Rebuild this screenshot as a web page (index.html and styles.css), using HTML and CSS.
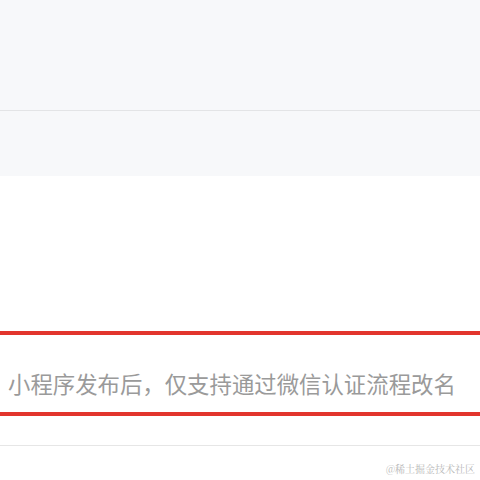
FILE: index.html
```html
<!DOCTYPE html>
<html lang="zh">
<head>
<meta charset="utf-8">
<link rel="stylesheet" href="styles.css">
</head>
<body>
<div class="page">
  <div class="top-bar"></div>
  <div class="top-sub"></div>
  <div class="spacer"></div>
  <div class="field">
    <div class="hint">小程序发布后，仅支持通过微信认证流程改名</div>
  </div>
  <div class="gap"></div>
  <div class="row">
    <div class="row-label">小程序简称 设置简称 可选</div>
  </div>
  <div class="watermark">@稀土掘金技术社区</div>
</div>
</body>
</html>
```
FILE: styles.css
```css
html, body {
  margin: 0;
  padding: 0;
  background: #ffffff;
}
.page {
  position: relative;
  width: 480px;
  height: 480px;
  overflow: hidden;
  font-family: "Noto Sans CJK SC", "Noto Sans", sans-serif;
}
.top-bar {
  height: 110px;
  background: #f7f8fa;
  border-bottom: 1px solid #e3e4e6;
}
.top-sub {
  height: 65px;
  background: #f7f8fa;
}
.spacer {
  height: 155px;
}
.field {
  border-top: 4px solid #e2352d;
  border-bottom: 4px solid #e2352d;
  padding: 37px 0 18px 8px;
}
.hint {
  font-size: 22.4px;
  line-height: 22px;
  color: #9a9a9a;
  white-space: nowrap;
}
.gap {
  height: 29px;
  border-bottom: 1px solid #e6e6e6;
}
.row {
  padding: 32px 0 0 30px;
}
.row-label {
  font-size: 22px;
  line-height: 22px;
  color: #333333;
  letter-spacing: 4px;
}
.watermark {
  position: absolute;
  right: 5px;
  top: 462px;
  font-family: "Noto Serif CJK SC", "Noto Sans CJK SC", serif;
  font-size: 10px;
  line-height: 14px;
  color: #b8b8b8;
}
```
